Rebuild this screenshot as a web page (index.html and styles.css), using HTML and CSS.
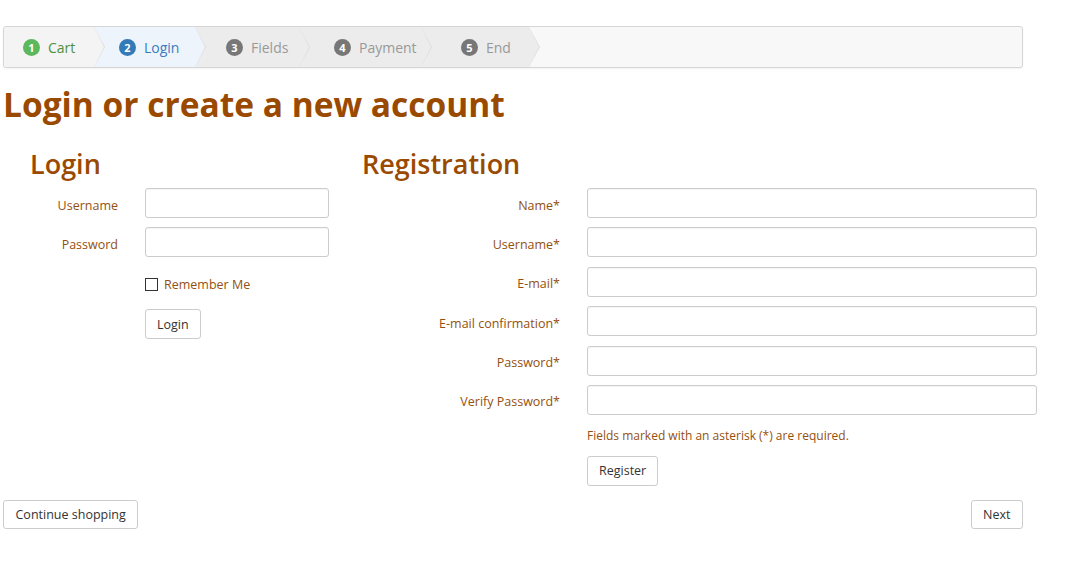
FILE: index.html
```html
<!DOCTYPE html>
<html>
<head>
<meta charset="utf-8">
<link rel="stylesheet" href="styles.css">
</head>
<body>
<div class="page">
  <ol class="steps">
    <li class="step done"><span class="badge">1</span><span class="label">Cart</span></li>
    <li class="step active"><span class="badge">2</span><span class="label">Login</span></li>
    <li class="step todo"><span class="badge">3</span><span class="label">Fields</span></li>
    <li class="step todo"><span class="badge">4</span><span class="label">Payment</span></li>
    <li class="step todo"><span class="badge">5</span><span class="label">End</span></li>
  </ol>

  <h1 class="title">Login or create a new account</h1>

  <div class="forms">
    <section class="login">
      <h2 class="subtitle">Login</h2>
      <form class="grid login-grid">
        <label class="lbl">Username</label>
        <input class="field" type="text">
        <label class="lbl">Password</label>
        <input class="field" type="password">
        <div class="span remember"><span class="check"></span><span>Remember Me</span></div>
        <div class="span"><button type="button" class="btn">Login</button></div>
      </form>
    </section>
    <section class="register">
      <h2 class="subtitle">Registration</h2>
      <form class="grid reg-grid">
        <label class="lbl">Name*</label>
        <input class="field" type="text">
        <label class="lbl">Username*</label>
        <input class="field" type="text">
        <label class="lbl">E-mail*</label>
        <input class="field" type="text">
        <label class="lbl">E-mail confirmation*</label>
        <input class="field" type="text">
        <label class="lbl">Password*</label>
        <input class="field" type="password">
        <label class="lbl">Verify Password*</label>
        <input class="field" type="password">
        <div class="span help">Fields marked with an asterisk (*) are required.</div>
        <div class="span"><button type="button" class="btn">Register</button></div>
      </form>
    </section>
  </div>

  <div class="footer">
    <button type="button" class="btn small">Continue shopping</button>
    <button type="button" class="btn small">Next</button>
  </div>
</div>
</body>
</html>
```

FILE: styles.css
```css
html, body {
  margin: 0;
  padding: 0;
  background: #ffffff;
}
body {
  font-family: "Open Sans", "Liberation Sans", sans-serif;
  color: #333;
}
.page {
  width: 1020px;
  padding: 26px 0 0 3px;
}

/* steps */
.steps {
  list-style: none;
  margin: 0;
  padding: 0;
  height: 40px;
  display: flex;
  border: 1px solid #d6d6d6;
  border-radius: 3px;
  background: #f8f8f8;
  box-shadow: 0 1px 2px rgba(0,0,0,0.05);
}
.step {
  position: relative;
  display: flex;
  align-items: center;
  gap: 8px;
  font-size: 14px;
}
.step::before,
.step::after {
  content: "";
  position: absolute;
  top: 0;
  height: 100%;
  clip-path: polygon(0 0, 100% 50%, 0 100%);
}
.step::before {
  right: -11px;
  width: 11px;
  background: #dcdcdc;
  z-index: 1;
}
.step::after {
  right: -10px;
  width: 10px;
  z-index: 2;
}
.step:first-child { border-radius: 3px 0 0 3px; }
.done { background: #f4f4f4; padding: 0 18px 0 19px; width: 90px; box-sizing: border-box; }
.done::after { background: #f4f4f4; }
.active { background: #eef4fc; width: 101px; padding-left: 25px; box-sizing: border-box; }
.active::after { background: #eef4fc; }
.todo { background: #ececec; box-sizing: border-box; }
.todo::after { background: #ececec; }
.steps .todo:nth-child(3) { width: 104px; padding-left: 31px; }
.steps .todo:nth-child(4) { width: 122px; padding-left: 35px; }
.steps .todo:nth-child(5) { width: 108px; padding-left: 40px; }

.badge {
  width: 17px;
  height: 17px;
  border-radius: 50%;
  color: #fff;
  font-size: 11px;
  font-weight: 700;
  display: flex;
  align-items: center;
  justify-content: center;
  flex: none;
}
.done .badge { background: #5cb85c; }
.done .label { color: #4e8f3f; }
.active .badge { background: #337ab7; }
.active .label { color: #3a7dbd; }
.todo .badge { background: #777; }
.todo .label { color: #999; }

/* headings */
.title {
  margin: 16px 0 0 0;
  font-size: 33.5px;
  line-height: 40px;
  font-weight: 700;
  color: #9a4a00;
}
.forms {
  display: grid;
  grid-template-columns: 342px auto;
  margin-top: 24px;
}
.subtitle {
  margin: 0 0 8px 0;
  font-size: 27px;
  line-height: 32px;
  font-weight: 600;
  color: #9a4a00;
}
.login .subtitle { margin-left: 27px; }
.register .subtitle { margin-left: 17px; }

/* form grid */
.grid {
  display: grid;
  column-gap: 27px;
  row-gap: 9.4px;
  align-items: center;
  margin: 0;
}
.login-grid { grid-template-columns: 115px 184px; }
.reg-grid { grid-template-columns: 215px 450px; }
.lbl {
  text-align: right;
  font-size: 12.5px;
  padding-top: 4px;
  color: #94500f;
}
.field {
  box-sizing: border-box;
  height: 30px;
  border: 1px solid #cccccc;
  border-radius: 3px;
  background: #fff;
  margin: 0;
  padding: 0 8px;
  box-shadow: inset 0 1px 1px rgba(0,0,0,0.04);
}
.span { grid-column: 2; }
.remember {
  display: flex;
  align-items: center;
  gap: 6px;
  height: 30px;
  padding-top: 3px;
  font-size: 12.5px;
  color: #94500f;
}
.check {
  width: 11px;
  height: 11px;
  border: 1px solid #333;
  background: #fff;
}
.help {
  height: 22px;
  display: flex;
  align-items: center;
  font-size: 12px;
  color: #94500f;
}
.btn {
  font-family: "Open Sans", "Liberation Sans", sans-serif;
  font-size: 12.5px;
  color: #333;
  background: #fff;
  border: 1px solid #cccccc;
  border-radius: 3px;
  height: 30px;
  padding: 0 11px;
  margin: 0;
}
.btn.small { height: 29px; padding: 0 11.5px; }
.footer {
  display: flex;
  justify-content: space-between;
  margin-top: 14px;
}
```
